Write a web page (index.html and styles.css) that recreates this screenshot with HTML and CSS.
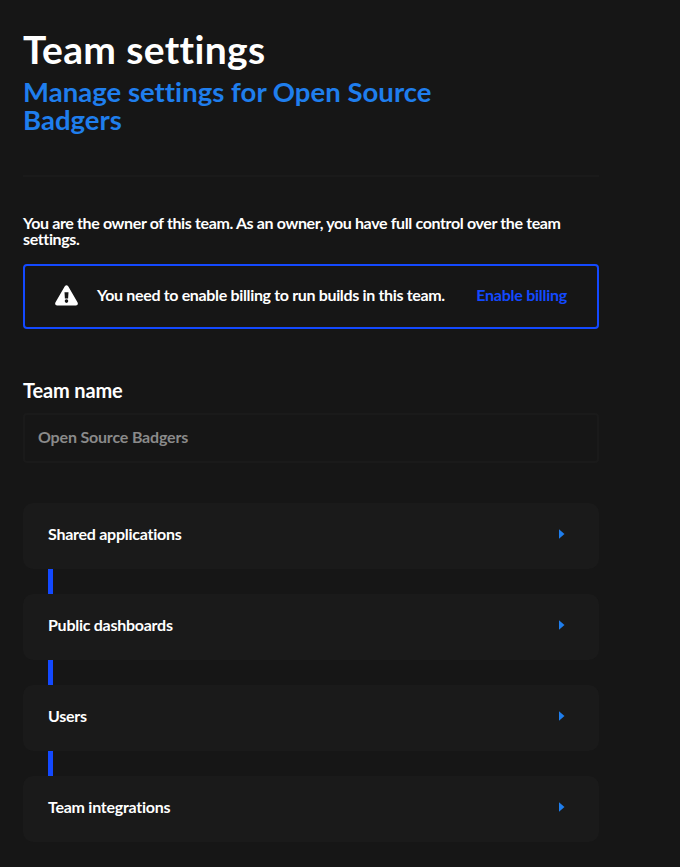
FILE: index.html
```html
<!DOCTYPE html>
<html lang="en">
<head>
<meta charset="utf-8">
<title>Team settings</title>
<link rel="stylesheet" href="styles.css">
</head>
<body>
<main class="page">
  <header class="header">
    <h1 class="title">Team settings</h1>
    <p class="subtitle">Manage settings for Open Source Badgers</p>
  </header>
  <p class="intro">You are the owner of this team. As an owner, you have full control over the team settings.</p>
  <div class="alert">
    <svg class="alert-icon" viewBox="0 0 23 21" aria-hidden="true">
      <path fill="#fff" fill-rule="evenodd" d="M9.8 1.3Q11.5-.7 13.2 1.3L22.6 17.5Q23.6 20.4 20.9 20.5H2.1Q-.6 20.4.4 17.5ZM9.5 7.2L9.9 13.6H13.1L13.5 7.2ZM11.5 14.3A1.8 1.8 0 1 0 11.5 17.9A1.8 1.8 0 1 0 11.5 14.3Z"/>
    </svg>
    <span class="alert-text">You need to enable billing to run builds in this team.</span>
    <a class="alert-link">Enable billing</a>
  </div>
  <h2 class="label">Team name</h2>
  <div class="field">Open Source Badgers</div>
  <div class="sections">
    <div class="card"><span>Shared applications</span><svg class="arrow" viewBox="0 0 6 10"><path d="M0 .3L5.5 5L0 9.7Z"/></svg></div>
    <div class="card"><span>Public dashboards</span><svg class="arrow" viewBox="0 0 6 10"><path d="M0 .3L5.5 5L0 9.7Z"/></svg></div>
    <div class="card"><span>Users</span><svg class="arrow" viewBox="0 0 6 10"><path d="M0 .3L5.5 5L0 9.7Z"/></svg></div>
    <div class="card"><span>Team integrations</span><svg class="arrow" viewBox="0 0 6 10"><path d="M0 .3L5.5 5L0 9.7Z"/></svg></div>
  </div>
</main>
</body>
</html>
```
FILE: styles.css
```css
* { box-sizing: border-box; }
body {
  margin: 0;
  background: #161616;
  color: #fff;
  font: 700 16px/16px Lato, "Liberation Sans", sans-serif;
  font-variant-ligatures: none;
  letter-spacing: -0.26px;
}
h1, h2, p { margin: 0; }
.page { width: 576px; margin-left: 23px; padding-top: 29px; }
.header { height: 148px; border-bottom: 2px solid #1a1a1a; }
.title { font-size: 39px; line-height: 40px; letter-spacing: 0.35px; }
.subtitle { width: 432px; margin-top: 9px; font-size: 27.5px; line-height: 28px; letter-spacing: 0.03px; color: #1f7eed; }
.intro { margin-top: 38px; letter-spacing: -0.37px; }
.alert {
  display: flex;
  align-items: center;
  height: 65px;
  margin-top: 17px;
  padding: 0 30px;
  border: 2px solid #1349ff;
  border-radius: 4px;
}
.alert-icon { width: 23px; height: 21px; margin-right: 19px; margin-top: -2px; }
.alert-text { padding-bottom: 3px; letter-spacing: -0.34px; }
.alert-link { margin-left: auto; padding-bottom: 3px; color: #1349ff; }
.label { margin-top: 50px; font-size: 20px; line-height: 22px; letter-spacing: -0.15px; }
.field {
  height: 50px;
  margin-top: 12px;
  padding: 14px 13px;
  border: 2px solid #1a1a1a;
  border-radius: 4px;
  color: #8a8a8a;
  letter-spacing: -0.18px;
}
.sections { display: flex; flex-direction: column; gap: 25px; margin-top: 40px; }
.card {
  position: relative;
  display: flex;
  align-items: center;
  justify-content: space-between;
  height: 66px;
  padding: 0 34px 4px 25px;
  border-radius: 10px;
  background: #1a1a1a;
}
.card + .card::before {
  content: "";
  position: absolute;
  left: 25px;
  top: -25px;
  width: 5px;
  height: 25px;
  background: #1349ff;
}
.arrow { width: 6px; height: 10px; margin-top: -1px; fill: #1f7eed; }
```
